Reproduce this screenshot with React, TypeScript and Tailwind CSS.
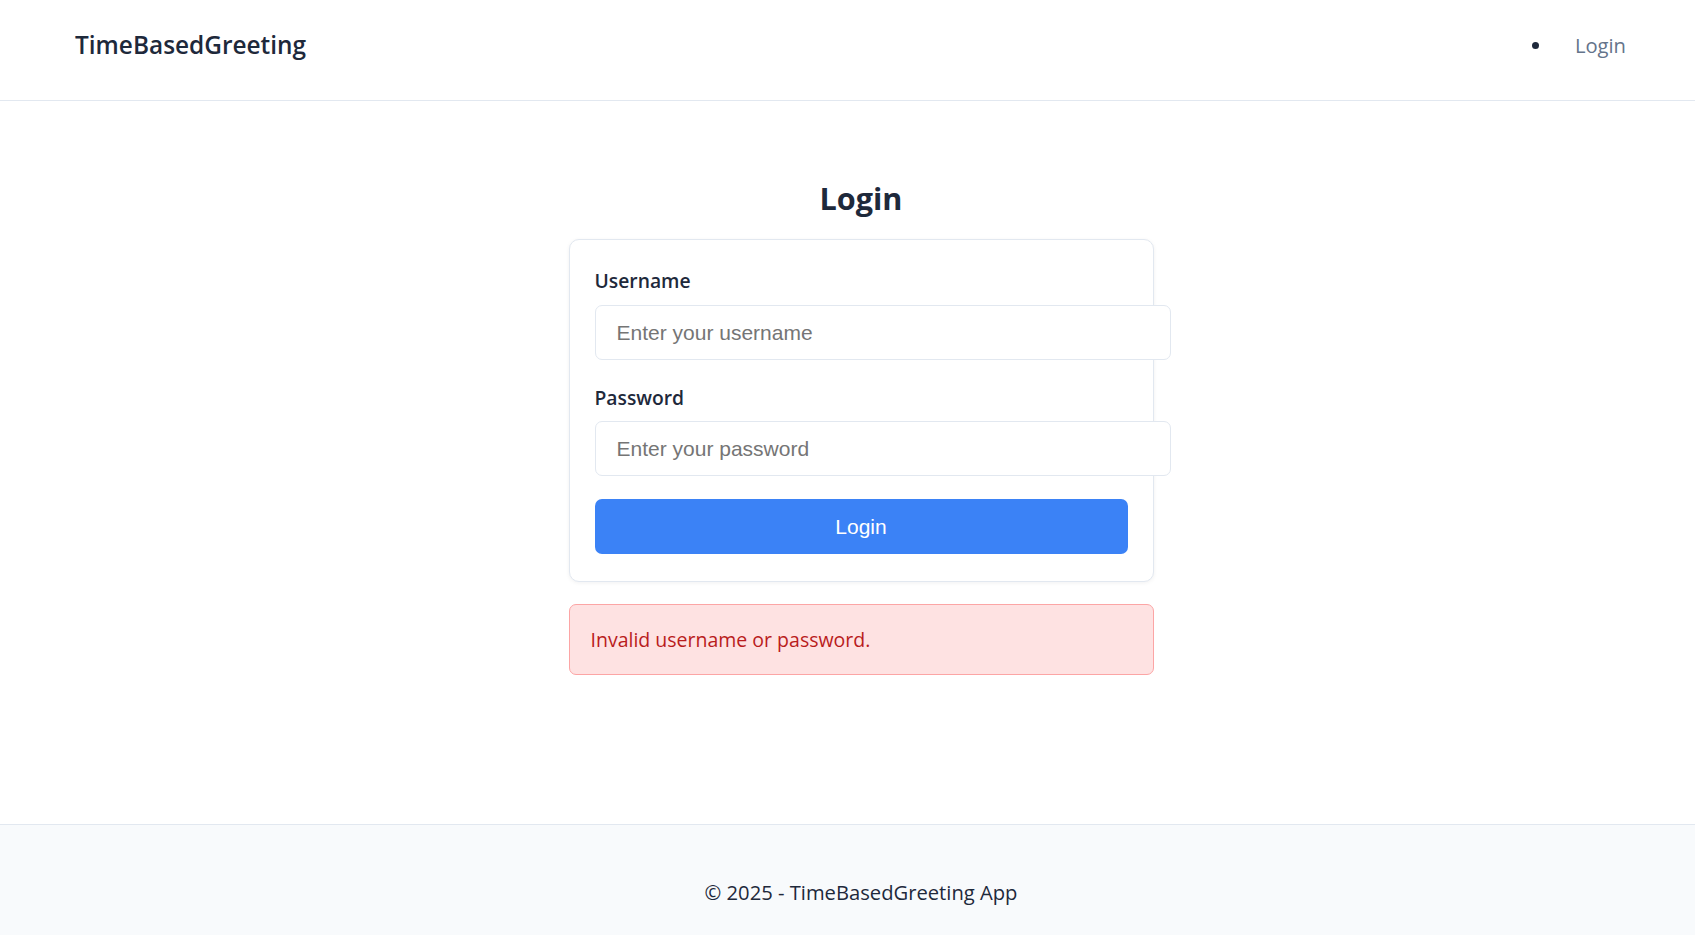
import { useState } from "react";

const sans = "font-['Open_Sans','Noto_Sans',sans-serif]";
const arial = "font-['Liberation_Sans',Arial,sans-serif]";

function Header() {
  return (
    <header className="h-[101px] border-b border-[#e2e8f0] bg-white flex items-center justify-between pl-[75px] pr-[69px] pb-[9px]">
      <div className="text-[24.4px] font-semibold text-[#1e293b] leading-none">TimeBasedGreeting</div>
      <ul className="flex items-center gap-[36px]">
        <li className="w-[7px] h-[7px] rounded-full bg-[#1e293b]" />
        <li className="text-[20.2px] text-[#64748b] leading-none">Login</li>
      </ul>
    </header>
  );
}

export default function App() {
  const [username, setUsername] = useState("");
  const [password, setPassword] = useState("");

  return (
    <div className={`${sans} bg-white text-[#1e293b] min-h-screen flex flex-col`}>
      <Header />
      <main className="h-[723px] flex flex-col items-center pt-[77px] pl-[27px]">
        <h2 className="text-[30.6px] font-bold leading-[40px] mb-[21px]">Login</h2>
        <form
          className="w-[585px] border border-[#e2e8f0] rounded-[10px] px-[25px] pt-[25px] pb-[27px] bg-white shadow-[0_1px_4px_rgba(15,23,42,0.06)]"
          onSubmit={(e) => e.preventDefault()}
        >
          <div className="mb-[22px]">
            <label className="block text-[19.3px] font-semibold leading-[31px] mb-[9px]">Username</label>
            <input
              type="text"
              value={username}
              onChange={(e) => setUsername(e.target.value)}
              placeholder="Enter your username"
              className={`${arial} w-[576px] h-[55px] border border-[#e2e8f0] rounded-[7px] pl-[21px] text-[21px] placeholder:text-[#757575] bg-white outline-none`}
            />
          </div>
          <div className="mb-[23px]">
            <label className="block text-[19.3px] font-semibold leading-[31px] mb-[8px]">Password</label>
            <input
              type="password"
              value={password}
              onChange={(e) => setPassword(e.target.value)}
              placeholder="Enter your password"
              className={`${arial} w-[576px] h-[55px] border border-[#e2e8f0] rounded-[7px] pl-[21px] text-[21px] placeholder:text-[#757575] bg-white outline-none`}
            />
          </div>
          <button
            type="submit"
            className={`${arial} w-full h-[55px] rounded-[7px] bg-[#3b82f6] text-white text-[21px]`}
          >
            Login
          </button>
        </form>
        <div className="w-[585px] mt-[22px] h-[71px] border border-[#fca5a5] bg-[#fee2e2] rounded-[7px] flex items-center pl-[21px] text-[19.5px] text-[#b91c1c]">
          Invalid username or password.
        </div>
      </main>
      <footer className="bg-[#f8fafc] border-t border-[#e2e8f0] pt-[52px] pb-[52px] text-center text-[20.2px] leading-[31px] pl-[27px]">
        © 2025 - TimeBasedGreeting App
      </footer>
    </div>
  );
}
